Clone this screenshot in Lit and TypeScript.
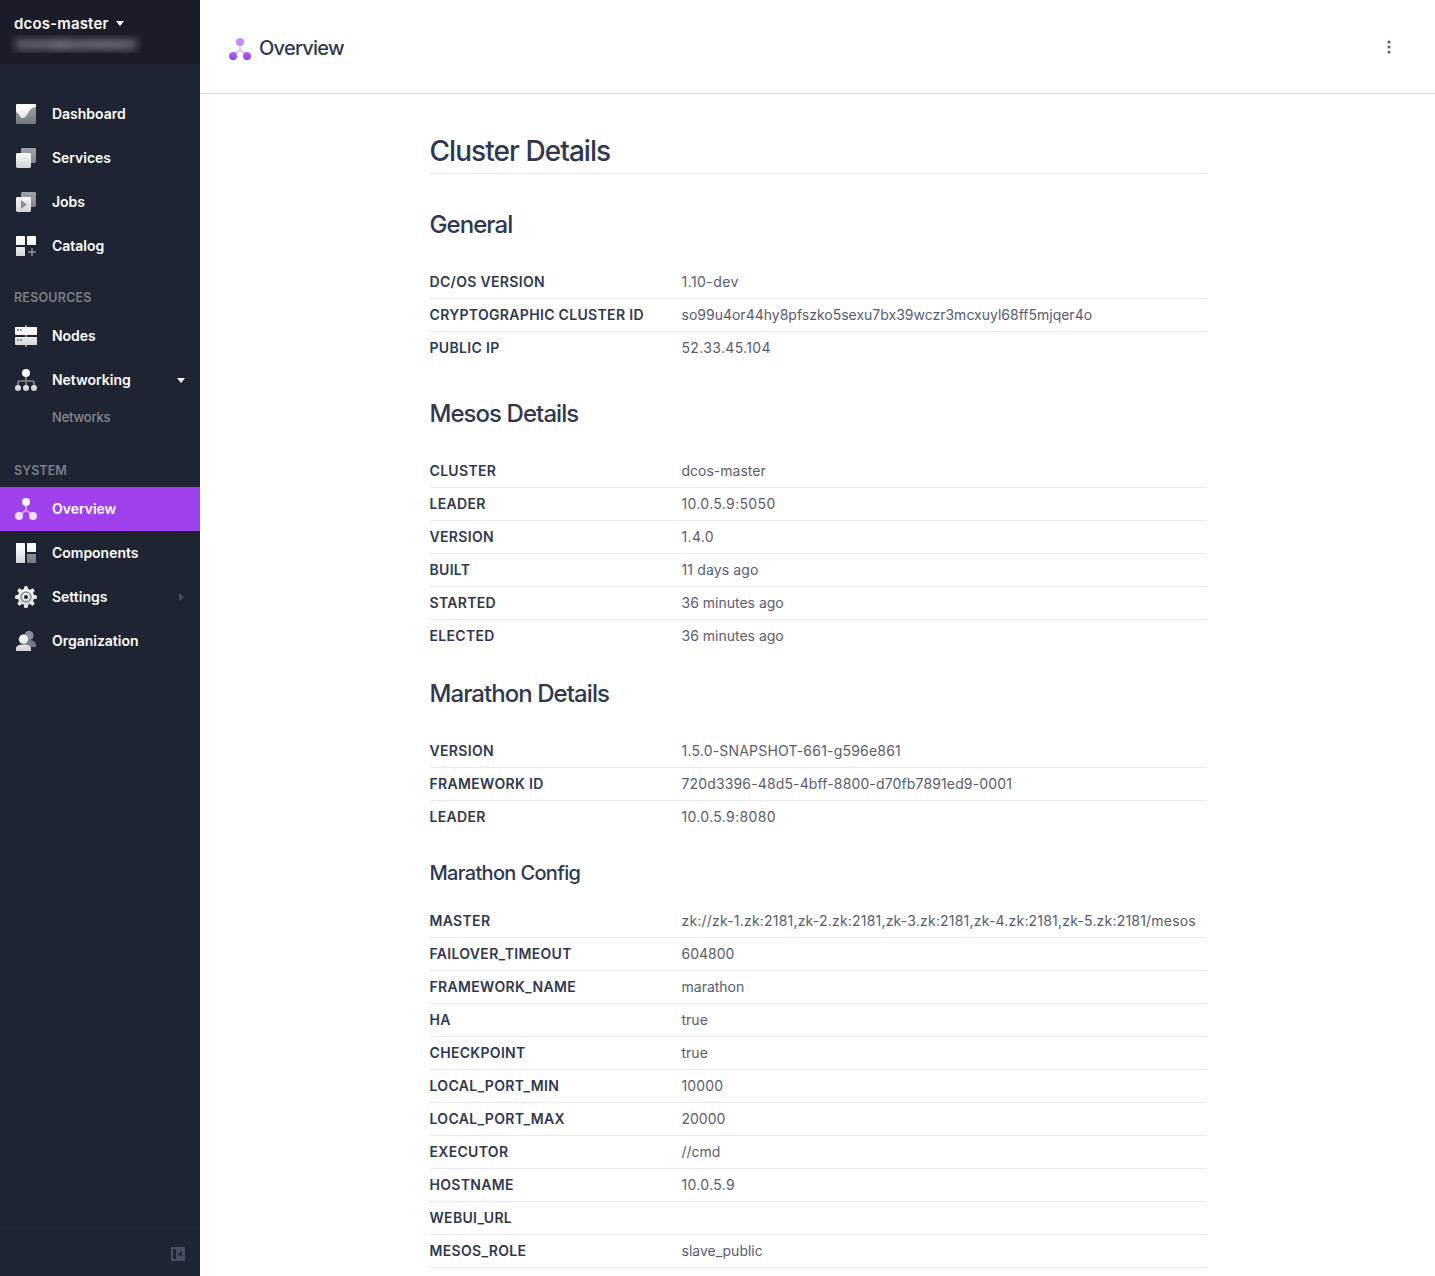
import { LitElement, html, css, svg, nothing } from "lit";
import { customElement, property } from "lit/decorators.js";

const icons: Record<string, unknown> = {
  dashboard: svg`
    <rect x="1" y="1" width="20" height="20" rx="1.2" fill="url(#dim)"/>
    <path d="M2.2 1H19.8Q21 1 21 2.2V4C17.5 4.2 15.8 5.5 14 8.5C12 12 10 15.2 7.5 15.2C5 15.2 4 9.8 1 9V2.2Q1 1 2.2 1Z" fill="url(#lit)"/>`,
  services: svg`
    <rect x="6" y="1" width="15" height="15" rx="1.4" fill="url(#dim)"/>
    <rect x="1" y="6" width="15" height="15" rx="1.4" fill="url(#lit)"/>`,
  jobs: svg`
    <rect x="6" y="1" width="15" height="15" rx="1.4" fill="url(#dim)"/>
    <rect x="1" y="6" width="15" height="15" rx="1.4" fill="url(#lit)"/>
    <path d="M6 9V18L12 13.5Z" fill="#8f9198"/>`,
  catalog: svg`
    <rect x="1" y="1" width="9" height="9" rx=".6" fill="url(#lit)"/>
    <rect x="12" y="1" width="9" height="9" rx=".6" fill="url(#lit)"/>
    <rect x="1" y="12" width="9" height="9" rx=".6" fill="url(#lit)"/>
    <path d="M16.25 13h1.5v3.25h3.25v1.5h-3.25v3.25h-1.5v-3.25h-3.25v-1.5h3.25z" fill="#8d9098"/>`,
  nodes: svg`
    <path d="M10 0h2v22h-2z" fill="#8d8f97"/>
    <path d="M0 10h22v2H0z" fill="#1e2431"/>
    <path d="M10 10h2v2h-2z" fill="#8d8f97"/>
    <rect x="0" y="2" width="22" height="8" rx=".7" fill="url(#lit)"/>
    <rect x="0" y="12" width="22" height="8" rx=".7" fill="url(#lit)"/>
    <path d="M2 4h2v2H2zM5 4h2v2H5zM2 14h2v2H2zM5 14h2v2H5z" fill="#94969d"/>`,
  networking: svg`
    <path d="M11 7V17M3 17V13.2Q3 12 4.2 12H17.8Q19 12 19 13.2V17" fill="none" stroke="#85888f" stroke-width="1.6"/>
    <circle cx="11" cy="4" r="4" fill="url(#lit)"/>
    <circle cx="3" cy="19" r="3" fill="url(#lit)"/><circle cx="11" cy="19" r="3" fill="url(#lit)"/><circle cx="19" cy="19" r="3" fill="url(#lit)"/>`,
  overview: svg`
    <path d="M11 6V12.2L5 16.5M11 12.2L17 16.5" fill="none" stroke="#fff" stroke-opacity=".5" stroke-width="1.8"/>
    <circle cx="11" cy="4" r="4" fill="#fbf6ff"/>
    <circle cx="4" cy="18" r="4" fill="#eedcfd"/><circle cx="18" cy="18" r="4" fill="#eedcfd"/>`,
  overviewPurple: svg`
    <path d="M11 6V12.2L5 16.5M11 12.2L17 16.5" fill="none" stroke="#dfc2fa" stroke-width="1.8"/>
    <circle cx="11" cy="4" r="4" fill="#c78ff6"/>
    <circle cx="4" cy="18" r="4" fill="url(#violet)"/><circle cx="18" cy="18" r="4" fill="url(#violet)"/>`,
  components: svg`
    <rect x="1" y="1" width="9" height="20" rx=".6" fill="url(#lit)"/>
    <rect x="12" y="1" width="9" height="9" rx=".6" fill="url(#lit)"/>
    <rect x="12" y="12" width="9" height="9" rx=".6" fill="url(#dim)"/>`,
  settings: svg`
    ${[0, 45, 90, 135].map(
      (a) => svg`<rect x="9" y="0" width="4" height="22" rx="1.6" transform="rotate(${a} 11 11)" fill="#e6e7e8"/>`
    )}
    <circle cx="11" cy="11" r="8.2" fill="url(#lit)"/>
    <circle cx="11" cy="11" r="4.9" fill="none" stroke="#8f9198" stroke-width="1.8"/>
    <circle cx="11" cy="11" r="2" fill="#1e2431"/>`,
  organization: svg`
    <circle cx="14" cy="5.4" r="4.6" fill="#8b8e96"/>
    <path d="M9 17V11L14 9.5C19 10.5 21 12.5 21 15.5V17Z" fill="#777a84"/>
    <circle cx="8.5" cy="9.3" r="4.7" fill="url(#lit)"/>
    <path d="M1 21V18.5C1 16 4 14.5 8.5 14.5S16 16 16 18.5V21Z" fill="url(#lit)"/>
    <path d="M5.2 13.4C7 14.6 10 14.6 11.8 13.4" fill="none" stroke="#9b9da4" stroke-width=".5"/>`,
};

interface NavItem {
  icon: string;
  label: string;
  active?: boolean;
  arrow?: "down" | "right";
}

const primary: NavItem[] = [
  { icon: "dashboard", label: "Dashboard" },
  { icon: "services", label: "Services" },
  { icon: "jobs", label: "Jobs" },
  { icon: "catalog", label: "Catalog" },
];
const resources: NavItem[] = [
  { icon: "nodes", label: "Nodes" },
  { icon: "networking", label: "Networking", arrow: "down" },
];
const system: NavItem[] = [
  { icon: "overview", label: "Overview", active: true },
  { icon: "components", label: "Components" },
  { icon: "settings", label: "Settings", arrow: "right" },
  { icon: "organization", label: "Organization" },
];

type Row = [string, string, string?];
const general: Row[] = [
  ["DC/OS VERSION", "1.10-dev", "loosest"],
  ["CRYPTOGRAPHIC CLUSTER ID", "so99u4or44hy8pfszko5sexu7bx39wczr3mcxuyl68ff5mjqer4o"],
  ["PUBLIC IP", "52.33.45.104", "looser"],
];
const mesos: Row[] = [
  ["CLUSTER", "dcos-master"],
  ["LEADER", "10.0.5.9:5050", "looser"],
  ["VERSION", "1.4.0", "looser"],
  ["BUILT", "11 days ago", "slight"],
  ["STARTED", "36 minutes ago"],
  ["ELECTED", "36 minutes ago"],
];
const marathon: Row[] = [
  ["VERSION", "1.5.0-SNAPSHOT-661-g596e861", "loose"],
  ["FRAMEWORK ID", "720d3396-48d5-4bff-8800-d70fb7891ed9-0001", "slight"],
  ["LEADER", "10.0.5.9:8080", "looser"],
];
const config: Row[] = [
  ["MASTER", "zk://zk-1.zk:2181,zk-2.zk:2181,zk-3.zk:2181,zk-4.zk:2181,zk-5.zk:2181/mesos", "loose"],
  ["FAILOVER_TIMEOUT", "604800"],
  ["FRAMEWORK_NAME", "marathon"],
  ["HA", "true"],
  ["CHECKPOINT", "true"],
  ["LOCAL_PORT_MIN", "10000", "slight"],
  ["LOCAL_PORT_MAX", "20000"],
  ["EXECUTOR", "//cmd"],
  ["HOSTNAME", "10.0.5.9", "looser"],
  ["WEBUI_URL", ""],
  ["MESOS_ROLE", "slave_public"],
];

@customElement("dcos-icon")
export class DcosIcon extends LitElement {
  @property() name = "";

  static styles = css`
    :host { display: block; width: 22px; height: 22px; flex: none; }
    svg { display: block; }
  `;

  render() {
    return html`<svg width="22" height="22" viewBox="0 0 22 22">
      <defs>
        <linearGradient id="lit" gradientUnits="userSpaceOnUse" x1="0" y1="0" x2="0" y2="22">
          <stop offset="0" stop-color="#fff"/><stop offset=".3" stop-color="#f8f8f8"/><stop offset="1" stop-color="#d0d1d4"/>
        </linearGradient>
        <linearGradient id="dim" gradientUnits="userSpaceOnUse" x1="0" y1="0" x2="0" y2="22">
          <stop offset="0" stop-color="#a3a5ab"/><stop offset="1" stop-color="#757882"/>
        </linearGradient>
        <linearGradient id="violet" gradientUnits="userSpaceOnUse" x1="0" y1="14" x2="0" y2="22">
          <stop offset="0" stop-color="#b66af3"/><stop offset="1" stop-color="#9c38ea"/>
        </linearGradient>
      </defs>
      ${icons[this.name] ?? nothing}
    </svg>`;
  }
}

@customElement("app-root")
export class AppRoot extends LitElement {
  static styles = css`
    :host {
      display: flex;
      height: 1276px;
      overflow: hidden;
      background: #fff;
      font-family: Inter, "Liberation Sans", sans-serif;
      color: #2f3850;
    }
    * { box-sizing: border-box; }
    svg { display: block; flex: none; }
    .sidebar {
      width: 200px;
      flex: none;
      display: flex;
      flex-direction: column;
      background: #1e2431;
      color: #fff;
    }
    .account {
      height: 64px;
      padding: 13px 11px 0;
      background: #1a1d28;
    }
    .cluster {
      display: flex;
      align-items: center;
      gap: 7px;
      height: 20px;
      padding-left: 3px;
      font-size: 15px;
      font-weight: 600;
      letter-spacing: 0.16px;
    }
    .redacted {
      display: flex;
      align-items: center;
      width: 130px;
      height: 18px;
      margin-top: 2px;
      padding: 0 5px;
      overflow: hidden;
      background: #20232e;
    }
    .smear {
      width: 120px;
      height: 11px;
      background: linear-gradient(90deg, #555962, #5a5d66 28%, #6a6d75 36%, #5b5e67 50%, #62656d 80%, #52555f);
      filter: blur(3px);
    }
    .nav { flex: 1; padding-top: 28px; }
    .item {
      display: flex;
      align-items: center;
      height: 44px;
      padding: 0 14px 0 15px;
      font-size: 14px;
      font-weight: 600;
      letter-spacing: -0.02px;
    }
    .item.active { background: #a041ee; }
    .label { flex: 1; margin-left: 15px; padding-bottom: 2px; }
    .section {
      height: 46px;
      padding: 20px 14px 0;
      line-height: 20px;
      font-size: 12.5px;
      font-weight: 600;
      letter-spacing: 0.22px;
      color: #7b7f8a;
    }
    .section.late { height: 53px; padding-top: 27px; letter-spacing: 0.05px; }
    .sub {
      height: 32px;
      padding: 5px 0 0 52px;
      line-height: 20px;
      font-size: 13px;
      font-weight: 500;
      letter-spacing: -0.2px;
      color: #868993;
    }
    .foot {
      display: flex;
      align-items: center;
      justify-content: flex-end;
      height: 45px;
      padding-right: 15px;
      border-top: 1px solid #191d29;
    }
    .main { flex: 1; min-width: 0; }
    .top {
      display: flex;
      align-items: center;
      height: 94px;
      padding: 2px 43px 0 29px;
      border-bottom: 1px solid #d6d7d9;
    }
    .crumb {
      flex: 1;
      margin-left: 8px;
      font-size: 20px;
      font-weight: 500;
      letter-spacing: -0.75px;
    }
    .top dcos-icon { margin-top: 2px; }
    .dots { margin-top: -2px; }
    .body { width: 776px; margin-left: 229.5px; }
    h1, h2, h3 { margin: 0; font-weight: 500; white-space: nowrap; letter-spacing: -0.95px; }
    h1 {
      height: 80px;
      padding-top: 39px;
      line-height: 36px;
      font-size: 28px;
      border-bottom: 1px solid #e9eaec;
    }
    h2 { height: 92px; padding-top: 36px; line-height: 30px; font-size: 24px; }
    h2.spaced { height: 90px; padding-top: 34px; }
    h2.near { height: 82px; padding-top: 26px; }
    h3 { height: 71px; padding-top: 25px; line-height: 28px; font-size: 20px; letter-spacing: -0.67px; }
    .row {
      display: flex;
      align-items: center;
      height: 33px;
      padding-bottom: 2px;
      border-bottom: 1px solid #e9eaec;
      font-size: 14px;
    }
    .row.last { border-bottom-color: transparent; }
    .key { width: 252px; flex: none; font-weight: 600; letter-spacing: 0.32px; }
    .value { color: #595c70; white-space: nowrap; }
    .slight { letter-spacing: 0.14px; }
    .loose { letter-spacing: 0.2px; }
    .looser { letter-spacing: 0.34px; }
    .loosest { letter-spacing: 0.45px; }
  `;

  private items(list: NavItem[]) {
    return list.map(
      (i) => html`<div class="item ${i.active ? "active" : ""}">
        <dcos-icon name=${i.icon}></dcos-icon>
        <span class="label">${i.label}</span>
        ${i.arrow === "down"
          ? html`<svg width="10" height="6" viewBox="0 0 10 6"><path d="M1 1H9L5 6Z" fill="#fff"/></svg>`
          : nothing}
        ${i.arrow === "right"
          ? html`<svg width="7" height="8" viewBox="0 0 7 8"><path d="M0 0V8L5 4Z" fill="#484d5c"/></svg>`
          : nothing}
      </div>`
    );
  }

  private rows(list: Row[], open = false) {
    return list.map(
      ([k, v, tracking], i) => html`<div class="row ${!open && i === list.length - 1 ? "last" : ""}">
        <div class="key"><span>${k}</span></div>
        <div class="value ${tracking ?? ""}">${v}</div>
      </div>`
    );
  }

  render() {
    return html`
      <aside class="sidebar">
        <div class="account">
          <div class="cluster">
            <span>dcos-master</span>
            <svg width="8" height="5" viewBox="0 0 8 5"><path d="M0 0H8L4 5Z" fill="#fff"/></svg>
          </div>
          <div class="redacted"><div class="smear"></div></div>
        </div>
        <nav class="nav">
          ${this.items(primary)}
          <div class="section">RESOURCES</div>
          ${this.items(resources)}
          <div class="sub">Networks</div>
          <div class="section late">SYSTEM</div>
          ${this.items(system)}
        </nav>
        <div class="foot">
          <svg width="14" height="14" viewBox="0 0 14 14">
            <path fill="#4a4f60" fill-rule="evenodd" d="M0 0H14V14H0ZM2 2V12H5V2ZM11 4L7 7L11 10Z"/>
          </svg>
        </div>
      </aside>
      <main class="main">
        <header class="top">
          <dcos-icon name="overviewPurple"></dcos-icon>
          <div class="crumb"><span>Overview</span></div>
          <svg class="dots" width="6" height="14" viewBox="0 0 6 14">
            <g fill="#595c70"><circle cx="3" cy="2" r="1.5"/><circle cx="3" cy="7" r="1.5"/><circle cx="3" cy="12" r="1.5"/></g>
          </svg>
        </header>
        <div class="body">
          <h1>Cluster Details</h1>
          <h2>General</h2>
          ${this.rows(general)}
          <h2 class="spaced">Mesos Details</h2>
          ${this.rows(mesos)}
          <h2 class="near">Marathon Details</h2>
          ${this.rows(marathon)}
          <h3>Marathon Config</h3>
          ${this.rows(config, true)}
        </div>
      </main>
    `;
  }
}
